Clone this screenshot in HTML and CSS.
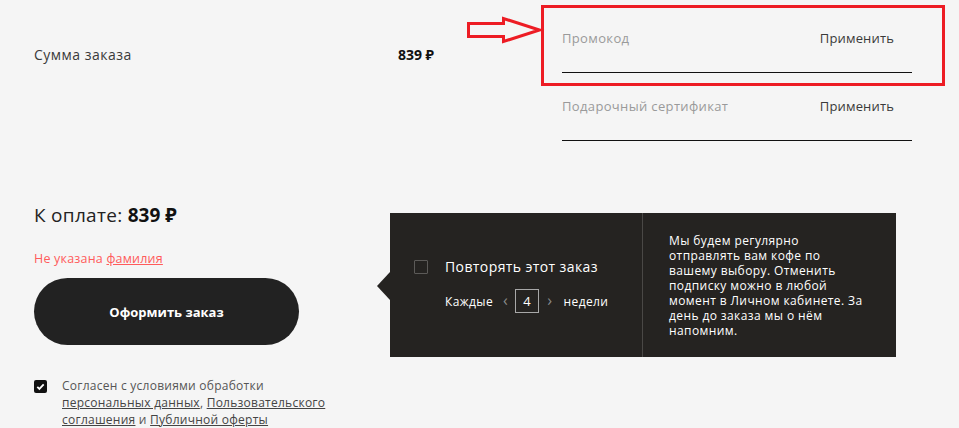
FILE: index.html
```html
<!DOCTYPE html>
<html lang="ru">
<head>
  <meta charset="UTF-8">
  <meta name="viewport" content="width=device-width, initial-scale=1.0">
  <title>Корзина - оформление заказа</title>
  <link rel="stylesheet" href="styles.css">
</head>
<body>

  <div class="page">

    <section class="top">
      <div class="sum-row">
        <span class="sum-label">Сумма заказа</span>
        <span class="sum-value">839 ₽</span>
      </div>

      <div class="codes">
        <div class="code-field">
          <span class="placeholder">Промокод</span>
          <button class="apply">Применить</button>
        </div>
        <div class="code-field">
          <span class="placeholder">Подарочный сертификат</span>
          <button class="apply">Применить</button>
        </div>
      </div>
    </section>

    <section class="bottom">
      <div class="checkout">
        <div class="total">К оплате: <b>839 ₽</b></div>
        <div class="error">Не указана <a href="#">фамилия</a></div>
        <button class="order-btn">Оформить заказ</button>

        <label class="consent">
          <span class="consent-box">
            <svg width="13" height="13" viewBox="0 0 13 13"><rect width="13" height="13" rx="2" fill="#111"/><path d="M3.3 6.8 L5.4 8.9 L9.7 4.3" stroke="#fff" stroke-width="1.8" fill="none"/></svg>
          </span>
          <span class="consent-text">Согласен с условиями обработки <a href="#">персональных данных</a>, <a href="#">Пользовательского соглашения</a> и <a href="#">Публичной оферты</a></span>
        </label>
      </div>

      <div class="repeat">
        <div class="repeat-left">
          <label class="repeat-check">
            <span class="box"></span>
            <span>Повторять этот заказ</span>
          </label>
          <div class="period">
            <span>Каждые</span>
            <span class="arrow prev">&lsaquo;</span>
            <span class="num">4</span>
            <span class="arrow next">&rsaquo;</span>
            <span>недели</span>
          </div>
        </div>
        <p class="repeat-right">
          Мы будем регулярно<br>
          отправлять вам кофе по<br>
          вашему выбору. Отменить<br>
          подписку можно в любой<br>
          момент в Личном кабинете. За<br>
          день до заказа мы о нём<br>
          напомним.
        </p>
      </div>
    </section>

    <!-- пометка на скриншоте -->
    <div class="mark-box"></div>
    <svg class="mark-arrow" width="80" height="30" viewBox="0 0 80 30">
      <polygon points="1.5,8.5 36.5,8.5 36.5,3.5 72.5,15 36.5,26.5 36.5,21.5 1.5,21.5" fill="none" stroke="#ed1c24" stroke-width="3"/>
    </svg>

  </div>

</body>
</html>
```

FILE: styles.css
```css
body {
  margin: 0;
  background-color: #f5f5f5;
  font-family: 'Open Sans', 'Noto Sans', sans-serif;
  color: #333;
}

.page {
  position: relative;
  width: 959px;
  height: 428px;
  padding: 28px 0 0 34px;
  box-sizing: border-box;
  overflow: hidden;
}

/* верхняя часть */
.top {
  display: flex;
}

.sum-row {
  display: flex;
  justify-content: space-between;
  width: 400px;
  padding-top: 17px;
  font-size: 14px;
  line-height: 20px;
  align-self: flex-start;
}

.sum-label {
  color: #3a3a3a;
  letter-spacing: 0.5px;
}

.sum-value {
  font-weight: 700;
  color: #111;
}

.codes {
  margin-left: 128px;
  width: 350px;
  display: flex;
  flex-direction: column;
  gap: 23px;
}

.code-field {
  display: flex;
  justify-content: space-between;
  height: 44px;
  border-bottom: 1px solid #111;
  font-size: 13px;
  line-height: 20px;
}

.placeholder {
  color: #9a9a9a;
  letter-spacing: 0.35px;
}

.apply {
  border: none;
  background: none;
  padding: 0;
  margin-right: 18px;
  font-family: inherit;
  font-size: 13px;
  line-height: 20px;
  height: 20px;
  color: #3a3a3a;
  letter-spacing: 0.15px;
  cursor: pointer;
}

/* нижняя часть */
.bottom {
  display: flex;
  margin-top: 61px;
}

.checkout {
  width: 356px;
}

.total {
  font-size: 19px;
  line-height: 26px;
  color: #222;
  letter-spacing: 0.3px;
}

.total b {
  color: #111;
  letter-spacing: 0;
}

.error {
  margin-top: 22px;
  font-size: 12.5px;
  line-height: 18px;
  color: #ff5b5b;
  letter-spacing: 0.2px;
}

.error a {
  color: #ff5b5b;
}

.order-btn {
  display: block;
  margin-top: 10px;
  width: 265px;
  height: 67px;
  border: none;
  border-radius: 34px;
  background-color: #222;
  color: #fff;
  font-family: inherit;
  font-size: 13px;
  font-weight: 700;
  cursor: pointer;
}

.consent {
  display: flex;
  margin-top: 32px;
  font-size: 12px;
  line-height: 17px;
  color: #555;
  letter-spacing: 0.25px;
}

.consent-box {
  width: 13px;
  height: 13px;
  margin-top: 3px;
  flex-shrink: 0;
}

.consent-box svg {
  display: block;
}

.consent-text {
  margin-left: 15px;
  width: 272px;
}

.consent-text a {
  color: #444;
}

/* блок подписки */
.repeat {
  position: relative;
  display: flex;
  margin-top: 11px;
  width: 506px;
  height: 144px;
  background-color: #252321;
  color: #fff;
  align-self: flex-start;
}

.repeat::before {
  content: '';
  position: absolute;
  left: -13px;
  top: 59px;
  border-style: solid;
  border-width: 14px 13px 14px 0;
  border-color: transparent #252321 transparent transparent;
}

.repeat-left {
  width: 253px;
  box-sizing: border-box;
  padding-left: 24px;
  display: flex;
  flex-direction: column;
  justify-content: center;
  border-right: 1px solid #4a4846;
}

.repeat-check {
  display: flex;
  align-items: center;
  font-size: 14px;
  line-height: 20px;
  letter-spacing: 0.4px;
}

.box {
  width: 12px;
  height: 12px;
  border: 1px solid #5c5a58;
  border-radius: 1px;
  margin-right: 17px;
}

.period {
  display: flex;
  align-items: center;
  margin-top: 12px;
  margin-left: 31px;
  font-size: 12px;
  letter-spacing: 0.4px;
}

.arrow {
  color: #8a8a8a;
  font-size: 16px;
  margin-bottom: 2px;
}

.prev {
  margin: 0 7px 2px 10px;
}

.next {
  margin: 0 11px 2px 8px;
}

.num {
  width: 22px;
  height: 22px;
  border: 1px solid #a8a8a8;
  display: flex;
  align-items: center;
  justify-content: center;
  font-size: 13px;
}

.repeat-right {
  margin: 0;
  padding-left: 26px;
  align-self: center;
  font-size: 12px;
  line-height: 15px;
  letter-spacing: 0.4px;
}

/* пометка */
.mark-box {
  position: absolute;
  left: 541px;
  top: 5px;
  width: 398px;
  height: 75px;
  border: 3px solid #ed1c24;
}

.mark-arrow {
  position: absolute;
  left: 467px;
  top: 15px;
}
```
